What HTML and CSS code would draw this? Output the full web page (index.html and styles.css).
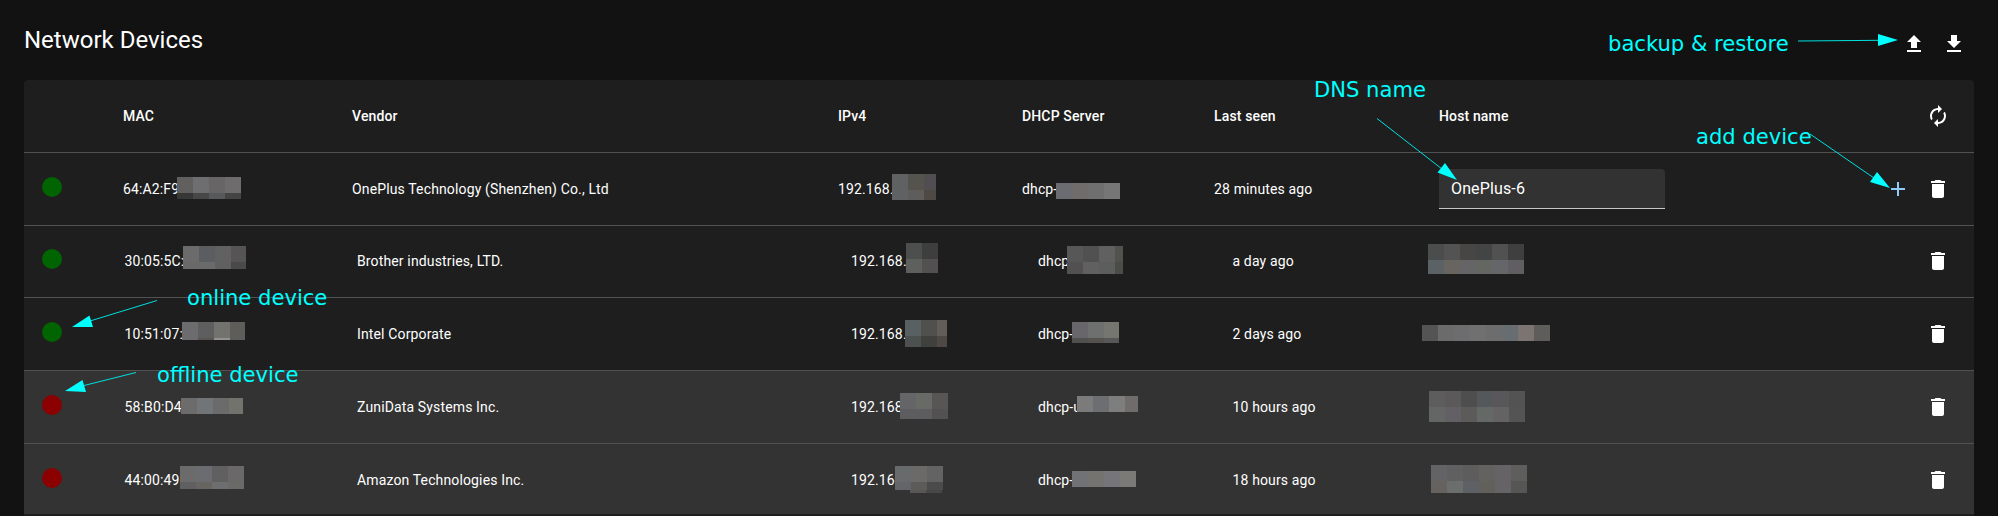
FILE: index.html
```html
<!DOCTYPE html>
<html lang="en">
<head>
<meta charset="utf-8">
<title>Network Devices</title>
<link rel="stylesheet" href="styles.css">
</head>
<body>
<svg class="defs" aria-hidden="true">
  <symbol id="trash" viewBox="0 0 24 24"><path d="M6 19c0 1.100.9 2 2 2h8c1.100 0 2-.9 2-2V7H6v12zM19 4h-3.500l-1-1h-5l-1 1H5v2h14V4z"/></symbol>
  <symbol id="plus" viewBox="0 0 24 24"><path d="M19 13h-6v6h-2v-6H5v-2h6V5h2v6h6v2z"/></symbol>
  <symbol id="sync" viewBox="0 0 24 24"><path d="M12 6v3l4-4-4-4v3c-4.420 0-8 3.580-8 8 0 1.570.46 3.030 1.240 4.260L6.700 14.800c-.45-.83-.7-1.790-.7-2.800 0-3.310 2.690-6 6-6zm6.760 1.740L17.300 9.200c.44.84.7 1.790.7 2.800 0 3.310-2.690 6-6 6v-3l-4 4 4 4v-3c4.420 0 8-3.580 8-8 0-1.570-.46-3.030-1.240-4.260z"/></symbol>
  <symbol id="upload" viewBox="0 0 24 24"><path d="M9 16h6v-6h4l-7-7-7 7h4v6zM5 18h14v2H5z"/></symbol>
  <symbol id="download" viewBox="0 0 24 24"><path d="M19 9h-4V3H9v6H5l7 7 7-7zM5 18v2h14v-2H5z"/></symbol>
</svg>
<main class="page">
  <header class="toolbar">
    <h1 class="title">Network Devices</h1>
    <div class="tools">
      <svg class="icon"><use href="#upload"/></svg>
      <svg class="icon"><use href="#download"/></svg>
    </div>
  </header>
  <section class="card">
    <div class="row head">
      <span></span><span>MAC</span><span>Vendor</span><span>IPv4</span><span>DHCP Server</span><span>Last seen</span><span>Host name</span>
      <div class="actions"><svg class="icon"><use href="#sync"/></svg></div>
    </div>
    <div class="row editing">
      <i class="dot online"></i><span>64:A2:F9</span><span>OnePlus Technology (Shenzhen) Co., Ltd</span><span>192.168.</span><span>dhcp-</span><span>28 minutes ago</span>
      <div class="field">OnePlus-6</div>
      <div class="actions"><svg class="icon add"><use href="#plus"/></svg><svg class="icon"><use href="#trash"/></svg></div>
    </div>
    <div class="row device short">
      <i class="dot online"></i><span>30:05:5C:</span><span>Brother industries, LTD.</span><span>192.168.</span><span>dhcp</span><span>a day ago</span><span></span>
      <div class="actions"><svg class="icon"><use href="#trash"/></svg></div>
    </div>
    <div class="row device">
      <i class="dot online"></i><span>10:51:07:</span><span>Intel Corporate</span><span>192.168.</span><span>dhcp-</span><span>2 days ago</span><span></span>
      <div class="actions"><svg class="icon"><use href="#trash"/></svg></div>
    </div>
    <div class="row device offline-row">
      <i class="dot offline"></i><span>58:B0:D4</span><span>ZuniData Systems Inc.</span><span>192.168</span><span>dhcp-u</span><span>10 hours ago</span><span></span>
      <div class="actions"><svg class="icon"><use href="#trash"/></svg></div>
    </div>
    <div class="row device offline-row">
      <i class="dot offline"></i><span>44:00:49</span><span>Amazon Technologies Inc.</span><span>192.16</span><span>dhcp-</span><span>18 hours ago</span><span></span>
      <div class="actions"><svg class="icon"><use href="#trash"/></svg></div>
    </div>
  </section>
</main>
<svg class="overlay" id="redactions" shape-rendering="crispEdges"></svg>
<svg class="overlay notes">
  <g class="arrows">
    <path d="M1798 41L1880 40.300"/><polygon points="1878,34 1878,46 1898,40"/>
    <path d="M1377 118.500L1442 169"/><polygon points="1445,163 1437.500,172.500 1457,180"/>
    <path d="M1810 134L1874 178"/><polygon points="1877,172 1870,182 1890,188"/>
    <path d="M157 300.500L90 321"/><polygon points="89.500,315.500 93,327 72,327"/>
    <path d="M136 372.500L84 385.500"/><polygon points="82.500,380 86,392 65,391"/>
  </g>
  <text x="1608" y="51">backup &amp; restore</text>
  <text x="1314" y="97">DNS name</text>
  <text x="1696" y="144">add device</text>
  <text x="187" y="305">online device</text>
  <text x="157" y="382">offline device</text>
</svg>
<script src="redactions.js"></script>
</body>
</html>
```
FILE: styles.css
```css
* { box-sizing: border-box; }
body {
  margin: 0;
  background: #fff;
  color: #fff;
  font-family: Roboto, sans-serif;
  height: 516px;
  overflow: hidden;
  position: relative;
}
.defs { display: none; }
.page {
  height: 516px;
  padding: 0 24px;
  width: 1998px;
  background: #121212;
}
.toolbar {
  height: 80px;
  display: flex;
  justify-content: space-between;
}
.title {
  margin: 24px 0 0 0;
  font-size: 24px;
  line-height: 32px;
  font-weight: 400;
}
.tools {
  display: flex;
  gap: 16px;
  padding: 32px 8px 0 0;
}
.icon {
  width: 24px;
  height: 24px;
  fill: #fff;
  display: block;
}
.icon.add { fill: #90caf9; }
.card {
  background: #1e1e1e;
  border-radius: 4px 4px 0 0;
  height: 436px;
  overflow: hidden;
}
.row {
  display: grid;
  align-items: center;
  height: 73px;
  padding: 0 24px 0 18px;
  border-bottom: 1px solid #515151;
  font-size: 14px;
  line-height: 20px;
  letter-spacing: .14px;
  white-space: nowrap;
}
.head, .editing { grid-template-columns: 81px 229px 486px 184px 192px 225px 1fr auto; }
.device { grid-template-columns: 82.5px 232.5px 494px 187px 194.5px 196px 1fr auto; }
.head { font-weight: 500; }
.short { height: 72px; padding-bottom: 1px; }
.offline-row { background: #333; }
.card .row:last-child { height: 70px; border: 0; padding-top: 2px; }
.dot {
  width: 20px;
  height: 20px;
  border-radius: 50%;
  margin-bottom: 4px;
}
.online { background: #006400; }
.offline { background: #8b0000; }
.actions { display: flex; gap: 16px; }
.field {
  width: 226px;
  height: 40px;
  padding: 0 12px;
  background: #323232;
  border-bottom: 1px solid #c7c7c7;
  border-radius: 4px 4px 0 0;
  font-size: 16px;
  line-height: 39px;
}
.overlay {
  position: absolute;
  left: 0;
  top: 0;
  width: 1999px;
  height: 516px;
}
.notes text {
  font-family: "DejaVu Sans", sans-serif;
  font-size: 21.100px;
  fill: #00ffff;
}
.arrows { fill: #00ffff; }
.arrows path { stroke: #00e0e0; stroke-width: 1; fill: none; }
```
FILE: redactions.js
```js
// Each mosaic: x, y, right, bottom, rows of 16px tile colours.
const mosaics = [
  [177, 177, 241, 199, ["62605e 6e6e71 686567 6e6c6d", "373737 474747 57595b 444444"]],
  [183, 246, 246, 269, ["6b6b6b 5b5d60 616161 565455", "696969 696b69 606060 4a4a4a"]],
  [182, 322, 245, 340, ["6c6c6e 5e5e5f 72726f 5f5d5a", "6c6c6e 5c5450 929292 5f5d5a"]],
  [181, 398, 243, 414, ["6c6c6c 717577 6b6b6b 73736e"]],
  [180, 466, 244, 489, ["6b6b6b 6b6c6f 606061 6a6868", "606062 676462 6d6e6f 6a6a69"]],
  [892, 174, 936, 200, ["606163 54534e 504e50", "606163 5e5d5b 4e4945"]],
  [906, 243, 938, 273, ["4d4f4e 3e3e3f", "5d605c 525051"]],
  [905, 320, 947, 347, ["586062 50504f 625d58", "4c504f 40403f 4e4945"]],
  [900, 393, 948, 419, ["656567 686a65 575654", "5d5d5f 5d5d5f 545153"]],
  [895, 466, 943, 490, ["686b6b 6c6a68 636364", "646569 5d5b59 4b4b4c"]],
  [910, 490, 942, 493, ["585754 474747"]],
  [1056, 183, 1120, 199, ["6b6c72 706c6c 6f6f6f 777677"]],
  [1067, 246, 1123, 274, ["575757 515152 606060 51514d", "535052 606061 5b5e5c 4b4b47"]],
  [1072, 322, 1119, 343, ["69666b 6e7070 74766f", "50504f 53524f 575757"]],
  [1077, 396, 1138, 412, ["7b7b7b 6d6e71 7e7e7f 706c6c"]],
  [1072, 471, 1136, 487, ["707276 74736f 75757a 7b7a77"]],
  [1428, 244, 1524, 274, ["4a4d4c 535354 474645 434544 515152 403f40", "5b6265 68645f 656568 646662 65666a 605e60"]],
  [1422, 325, 1550, 341, ["545454 6b6b6b 6d6d70 707070 6d6d6d 686d71 7b7471 5f5d5a"]],
  [1429, 391, 1525, 422, ["5c5d5c 5c595b 4e4e4e 54585b 595759 535353", "646665 626064 5c5b59 646866 656264 545454"]],
  [1431, 465, 1527, 493, ["636365 606061 5d5d5d 636261 656366 5e5e5c", "656260 6a6e6c 5d6064 62605b 656366 565754"]],
];

const layer = document.getElementById("redactions");
for (const [x, y, right, bottom, rows] of mosaics) {
  rows.forEach((row, r) => row.split(" ").forEach((color, c) => {
    const tile = document.createElementNS("http://www.w3.org/2000/svg", "rect");
    const tx = x + c * 16, ty = y + r * 16;
    tile.setAttribute("x", tx);
    tile.setAttribute("y", ty);
    tile.setAttribute("width", Math.min(16, right - tx));
    tile.setAttribute("height", Math.min(16, bottom - ty));
    tile.setAttribute("fill", "#" + color);
    layer.append(tile);
  }));
}
```
